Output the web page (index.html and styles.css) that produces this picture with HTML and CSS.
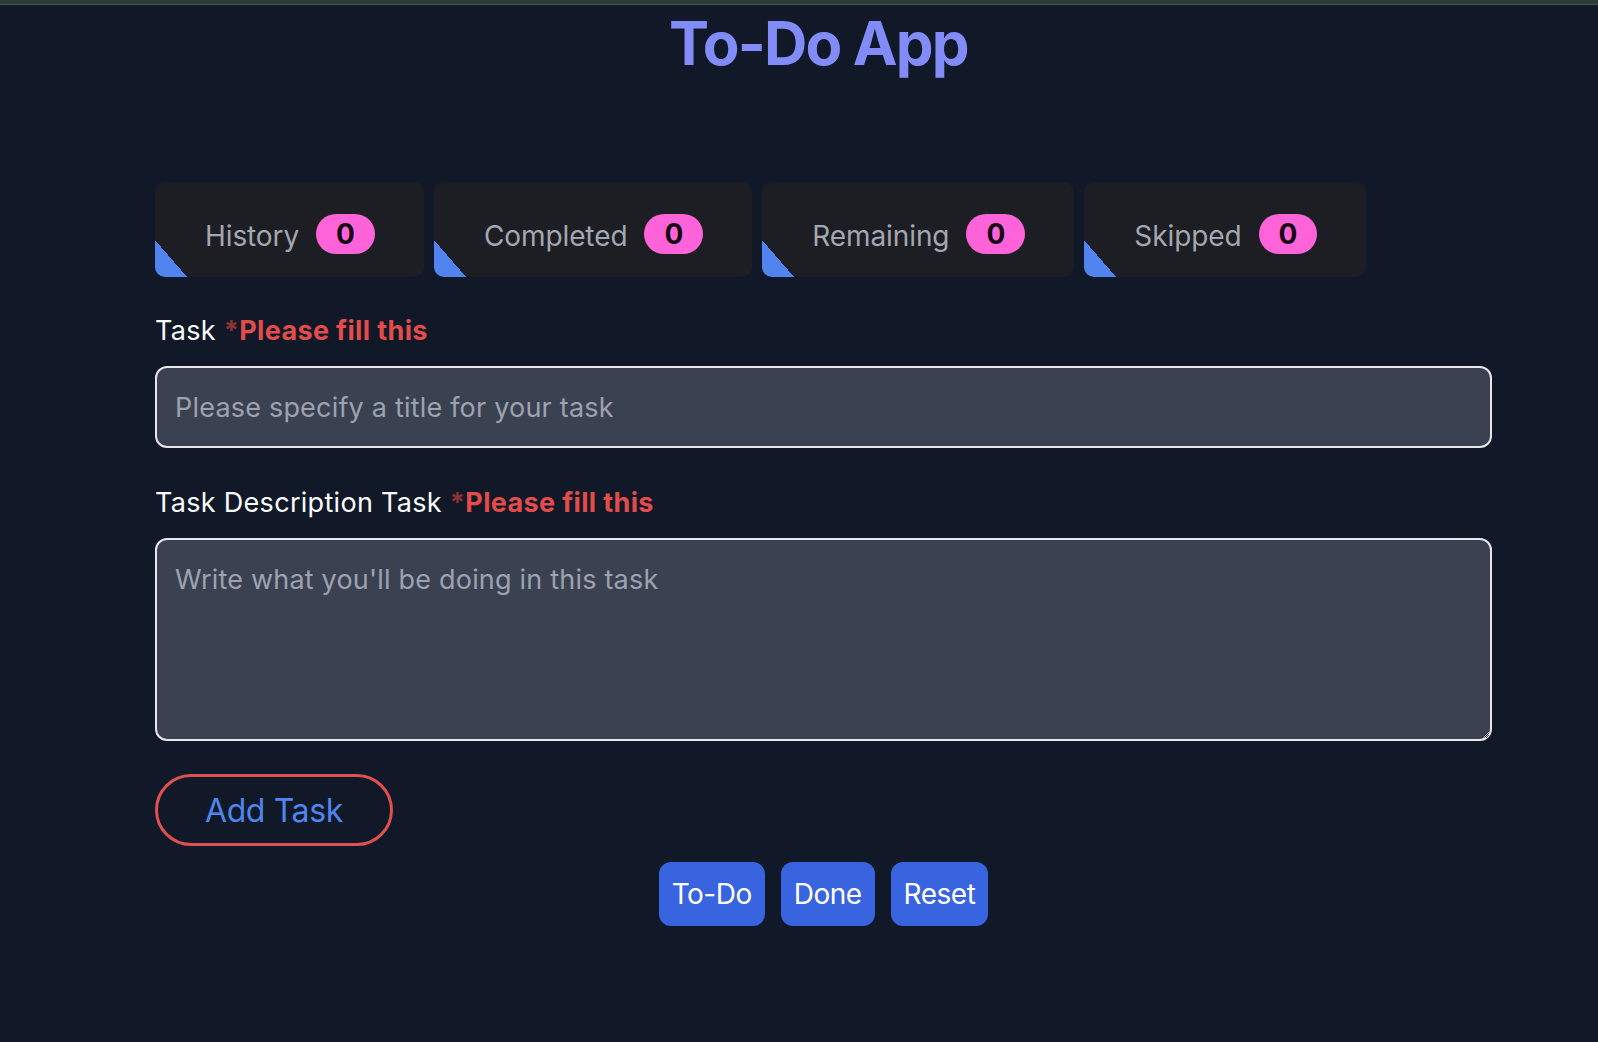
FILE: index.html
```html
<!DOCTYPE html>
<html lang="en">
<head>
<meta charset="utf-8">
<title>To-Do App</title>
<link rel="stylesheet" href="styles.css">
</head>
<body>
<div class="topbar"></div>
<main class="app">
  <h1 class="title">To-Do App</h1>
  <section class="stats">
    <div class="stat"><span class="stat-label">History</span><span class="badge">0</span></div>
    <div class="stat"><span class="stat-label">Completed</span><span class="badge">0</span></div>
    <div class="stat"><span class="stat-label">Remaining</span><span class="badge">0</span></div>
    <div class="stat"><span class="stat-label">Skipped</span><span class="badge">0</span></div>
  </section>
  <form class="form">
    <label class="label" for="task">Task <span class="req"><span class="star">*</span>Please fill this</span></label>
    <input class="field" id="task" type="text" placeholder="Please specify a title for your task">
    <label class="label label-2" for="desc">Task Description Task <span class="req"><span class="star">*</span>Please fill this</span></label>
    <textarea class="field area" id="desc" placeholder="Write what you'll be doing in this task"></textarea>
    <div class="add-row"><button type="button" class="add-btn">Add Task</button></div>
  </form>
  <div class="filters">
    <button type="button" class="filter-btn">To-Do</button>
    <button type="button" class="filter-btn">Done</button>
    <button type="button" class="filter-btn">Reset</button>
  </div>
</main>
</body>
</html>
```

FILE: styles.css
```css
* { box-sizing: border-box; }
html, body { margin: 0; padding: 0; }
body {
  background: #111827;
  font-family: Inter, "Noto Sans", sans-serif;
  color: #f3f4f6;
  min-height: 1042px;
}
.topbar {
  height: 5px;
  background: #2c3d3a;
  border-bottom: 1px solid #4a5251;
}
.app {
  padding: 0 106px 0 155px;
}
.title {
  margin: 8px 0 0;
  padding-right: 10px;
  text-align: center;
  font-size: 60px;
  line-height: 60px;
  font-weight: 700;
  color: #818cf8;
  letter-spacing: -1.8px;
}
.stats {
  display: flex;
  gap: 10px;
  margin-top: 109px;
}
.stat {
  height: 95px;
  display: flex;
  align-items: center;
  gap: 17px;
  padding: 12px 49px 0 50px;
  border-radius: 10px;
  background:
    linear-gradient(to top right, #5184ee 50%, transparent 50%) no-repeat left bottom / 32px 37px,
    #1c1e23;
}
.stat-label {
  font-size: 28px;
  color: #a3a7b1;
  letter-spacing: -0.1px;
}
.badge {
  display: inline-block;
  height: 40px;
  line-height: 40px;
  padding: 0 20px;
  border-radius: 20px;
  background: #ff63da;
  color: #140814;
  font-size: 28px;
  font-weight: 700;
  margin-top: -4px;
}
.form {
  display: flex;
  flex-direction: column;
  margin-top: 36px;
}
.label {
  font-size: 27px;
  line-height: 36px;
  color: #f9fafb;
  letter-spacing: 0.3px;
}
.label-2 { margin-top: 37px; }
.req {
  color: #e24c4b;
  font-weight: 700;
  letter-spacing: 0.35px;
}
.star { color: #8f3232; }
.field {
  margin-top: 17px;
  width: 100%;
  height: 82px;
  background: #3a4151;
  border: 2px solid #e5e7eb;
  border-radius: 12px;
  padding: 0 18px;
  font-family: Inter, "Noto Sans", sans-serif;
  font-size: 27px;
  letter-spacing: 0.2px;
  color: #f3f4f6;
  outline: none;
}
.field::placeholder { color: #9ca3af; }
.area {
  height: 203px;
  padding-top: 22px;
  line-height: 36px;
  resize: vertical;
}
.add-row {
  margin-top: 33px;
  display: flex;
}
.add-btn {
  height: 72px;
  padding: 0 47px;
  border: 3px solid #e0504f;
  border-radius: 36px;
  background: transparent;
  color: #4f86ee;
  font-family: Inter, "Noto Sans", sans-serif;
  font-size: 32px;
  letter-spacing: -0.4px;
}
.filters {
  display: flex;
  justify-content: center;
  gap: 16px;
  margin-top: 16px;
}
.filter-btn {
  height: 64px;
  padding: 0 13px;
  border: none;
  border-radius: 12px;
  background: #3864e0;
  color: #ffffff;
  font-family: Inter, "Noto Sans", sans-serif;
  font-size: 28px;
  letter-spacing: -0.5px;
}
```
